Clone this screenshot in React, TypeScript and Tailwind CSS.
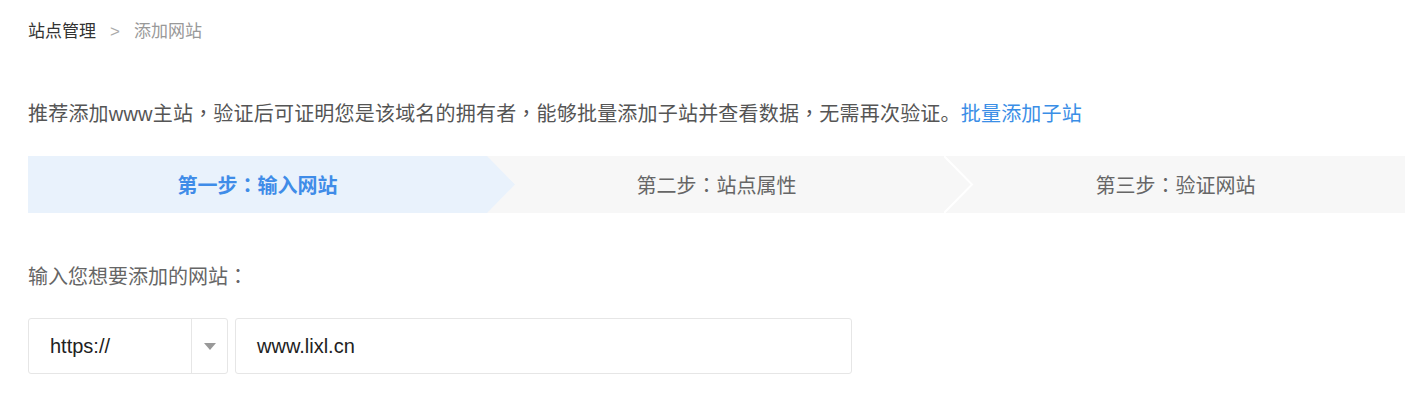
import React from 'react';

const font = { fontFamily: '"Liberation Sans", "Noto Sans CJK SC", sans-serif' };
const tcFont = { fontFamily: '"Noto Sans CJK TC", sans-serif' };

// 居中的全角标点
const Punct: React.FC<{ ch: string }> = ({ ch }) => <span style={tcFont}>{ch}</span>;

interface StepProps {
  head: string;
  tail: string;
  active?: boolean;
  last?: boolean;
}

const Step: React.FC<StepProps> = ({ head, tail, active = false, last = false }) => {
  return (
    <div
      className={
        'relative flex flex-1 items-center justify-center pt-[2px] ' +
        (active ? 'bg-[#e9f2fc]' : 'bg-[#f7f7f7]')
      }
    >
      <span
        className={
          'text-[20px] ' + (active ? 'font-bold text-[#3f8ce8]' : 'text-[#666666]')
        }
      >
        {head}
        <Punct ch="：" />
        {tail}
      </span>
      {/* 箭头 */}
      {!last && active && (
        <svg
          className="absolute top-0 right-[-28px] z-10"
          width="28"
          height="57"
          viewBox="0 0 28 57"
        >
          <polygon points="0,0 28,28.5 0,57" fill="#e9f2fc" />
        </svg>
      )}
      {!last && !active && (
        <svg
          className="absolute top-0 right-[-28px] z-10"
          width="30"
          height="57"
          viewBox="0 0 30 57"
        >
          <polyline points="0,0 28,28.5 0,57" fill="none" stroke="#ffffff" strokeWidth="2" />
        </svg>
      )}
    </div>
  );
};

export default function App() {
  return (
    <div className="min-h-[415px] w-full bg-white px-[28px]" style={font}>
      {/* 面包屑 */}
      <div className="flex h-[64px] items-center text-[17px]">
        <span className="text-[#333333]">站点管理</span>
        <span className="mx-[14px] text-[#aaaaaa]">&gt;</span>
        <span className="text-[#999999]">添加网站</span>
      </div>

      {/* 说明 */}
      <div className="mt-[33px] text-[20px] leading-[32px] tracking-[0.2px] text-[#555555]">
        推荐添加www主站<Punct ch="，" />验证后可证明您是该域名的拥有者<Punct ch="，" />
        能够批量添加子站并查看数据<Punct ch="，" />无需再次验证。
        <span className="text-[#3a8ee6]">批量添加子站</span>
      </div>

      {/* 步骤条 */}
      <div className="mt-[26px] flex h-[57px] w-[1377px]">
        <Step head="第一步" tail="输入网站" active />
        <Step head="第二步" tail="站点属性" />
        <Step head="第三步" tail="验证网站" last />
      </div>

      {/* 输入 */}
      <div className="mt-[48px] text-[20px] text-[#666666]">
        输入您想要添加的网站
        <Punct ch="：" />
      </div>

      <div className="mt-[26px] flex gap-[7px]">
        <div className="flex h-[56px] w-[200px] rounded-[3px] border border-[#e6e6e6] bg-white">
          <div className="flex flex-1 items-center pl-[21px] text-[20px] text-[#222222]">https://</div>
          <div className="flex w-[36px] items-center justify-center border-l border-[#e6e6e6]">
            <svg width="12" height="7" viewBox="0 0 12 7">
              <polygon points="0,0 12,0 6,7" fill="#999999" />
            </svg>
          </div>
        </div>
        <div className="flex h-[56px] w-[617px] items-center rounded-[3px] border border-[#e6e6e6] bg-white pl-[21px] text-[20px] text-[#222222]">
          www.lixl.cn
        </div>
      </div>
    </div>
  );
}
